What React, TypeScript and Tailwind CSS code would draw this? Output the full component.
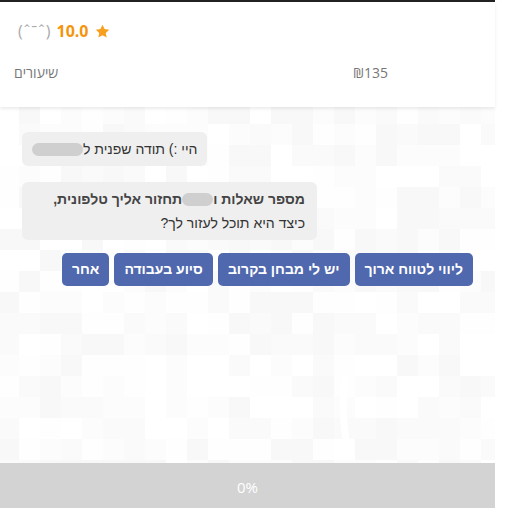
import React from 'react';

const shades = ['#ffffff', '#fefefe', '#fcfcfc', '#fafafa', '#f8f8f8'];

// deterministic noise for the pixel background
function shadeAt(c: number, r: number) {
  const n = Math.sin(c * 12.9898 + r * 78.233) * 43758.5453;
  const f = n - Math.floor(n);
  return shades[Math.floor(f * shades.length)];
}

function PixelBackground() {
  const size = 21;
  const cells = [];
  for (let r = 0; r < 18; r++) {
    for (let c = 0; c < 24; c++) {
      cells.push(<rect key={`${r}-${c}`} x={c * size - 2} y={r * size - 4} width={size} height={size} fill={shadeAt(c, r)} />);
    }
  }
  return (
    <svg className="absolute inset-0" width="495" height="356">
      {cells}
      <path d="M345 380 Q340 410 348 450" transform="translate(0,-107)" stroke="#ffffff" strokeWidth="7" fill="none" strokeLinecap="round" />
    </svg>
  );
}

function Blob({ w }: { w: string }) {
  return <span className={`inline-block ${w} h-[13px] rounded-full bg-[#cfcfcf] align-[-2px]`} />;
}

const options = ['אחר', 'סיוע בעבודה', 'יש לי מבחן בקרוב', 'ליווי לטווח ארוך'];

export default function App() {
  return (
    <div className="w-[508px] h-[508px] bg-white overflow-hidden" style={{ fontFamily: '"Liberation Sans", Arial, sans-serif' }}>
      <div className="w-[495px] h-full flex flex-col">
        <div className="h-[2px] bg-[#222]" />
        <div className="h-[105px] bg-white relative z-10 shadow-[0_2px_3px_rgba(0,0,0,0.08)] px-[14px] flex flex-col" style={{ fontFamily: '"Open Sans", "Liberation Sans", sans-serif' }}>
          <div className="flex items-center gap-[5px] pl-[4px] mt-[17px] h-[24px]">
            <span className="text-[16px] text-[#aaa] tracking-[1px]">(ˆˉˆ)</span>
            <span className="text-[16px] font-bold text-[#f5940b]">10.0</span>
            <svg width="17" height="17" viewBox="0 0 24 24">
              <path d="M12 2.5l2.9 6.1 6.6.8-4.9 4.6 1.3 6.6L12 17.3l-5.9 3.3 1.3-6.6-4.9-4.6 6.6-.8z" fill="#f7a020" />
            </svg>
          </div>
          <div className="flex items-center mt-[18px] h-[22px] text-[14px] text-[#777]">
            <span className="w-[339px] text-left">שיעורים</span>
            <span>₪135</span>
          </div>
        </div>
        <div className="relative h-[356px]">
          <PixelBackground />
          <div className="relative px-[22px] pt-[25px] flex flex-col items-start text-[14px] text-[#333]">
            <div dir="rtl" className="bg-[#efefef] rounded-[6px] h-[34px] px-[10px] flex items-center">
              <span>היי :) תודה שפנית ל</span>
              <Blob w="w-[51px]" />
            </div>
            <div dir="rtl" className="mt-[16px] bg-[#efefef] rounded-[6px] pr-[12px] pl-[12px] py-[5px] leading-[24px] w-[295px]">
              <div className="font-bold text-[#444]">
                מספר שאלות ו<Blob w="w-[31px]" />תחזור אליך טלפונית,
              </div>
              <div>כיצד היא תוכל לעזור לך?</div>
            </div>
            <div className="self-stretch mt-[13px] flex justify-end gap-[5px]">
              {options.map((o) => (
                <div key={o} dir="rtl" className="h-[33px] px-[10px] rounded-[5px] bg-[#5068ae] text-white text-[14px] font-bold flex items-center">
                  {o}
                </div>
              ))}
            </div>
          </div>
        </div>
        <div className="h-[45px] bg-[#d3d3d3] flex items-center justify-center text-white text-[15px] pt-[3px]" style={{ fontFamily: '"Open Sans", sans-serif' }}>
          0%
        </div>
      </div>
    </div>
  );
}
